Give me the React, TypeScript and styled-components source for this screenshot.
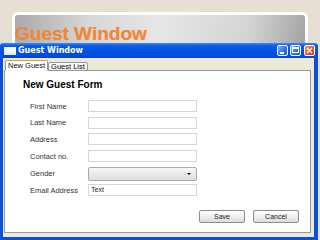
import React from 'react';
import styled, { createGlobalStyle } from 'styled-components';

const GlobalStyle = createGlobalStyle`
  html, body {
    margin: 0;
    padding: 0;
    background: #e5dfd4;
  }
  * {
    box-sizing: border-box;
  }
`;

const fields = [
  { label: 'First Name', h: 16 },
  { label: 'Last Name', h: 17 },
  { label: 'Address', h: 16 },
  { label: 'Contact no.', h: 18 },
  { label: 'Gender', h: 17, combo: true },
  { label: 'Email Address', h: 16, value: 'Text' },
];

const App: React.FC = () => {
  return (
    <Page>
      <GlobalStyle />
      <Slide>
        <SlideTitle>Guest Window</SlideTitle>
      </Slide>
      <Window>
        <TitleBar>
          <AppIcon />
          <TitleText>Guest Window</TitleText>
          <Controls>
            <CtrlButton>
              <svg width="11" height="11" viewBox="0 0 11 11">
                <rect x="3" y="7" width="4" height="2" fill="#fff" />
              </svg>
            </CtrlButton>
            <CtrlButton>
              <svg width="11" height="11" viewBox="0 0 11 11">
                <rect x="2.5" y="2.5" width="6" height="5" fill="none" stroke="#fff" strokeWidth="1" />
                <rect x="2.5" y="2.5" width="6" height="1.5" fill="#fff" />
              </svg>
            </CtrlButton>
            <CtrlButton close>
              <svg width="11" height="11" viewBox="0 0 11 11">
                <path d="M3 3 L8 8 M8 3 L3 8" stroke="#fff" strokeWidth="1.4" />
              </svg>
            </CtrlButton>
          </Controls>
        </TitleBar>
        <Body>
          <Tabs>
            <Tab active>New Guest</Tab>
            <Tab>Guest List</Tab>
          </Tabs>
          <Panel>
            <FormTitle>New Guest Form</FormTitle>
            {fields.map((f) => (
              <Row key={f.label} h={f.h}>
                <Label>{f.label}</Label>
                {f.combo ? (
                  <Combo>
                    <Caret />
                  </Combo>
                ) : (
                  <Input>{f.value}</Input>
                )}
              </Row>
            ))}
            <Actions>
              <Button>Save</Button>
              <Button>Cancel</Button>
            </Actions>
          </Panel>
        </Body>
      </Window>
    </Page>
  );
};

const Page = styled.div`
  width: 320px;
  height: 240px;
  overflow: hidden;
  display: flex;
  flex-direction: column;
  padding-top: 12px;
`;

const Slide = styled.div`
  margin: 0 12px 0 12px;
  height: 31px;
  border: 3px solid #fff;
  border-bottom: none;
  border-radius: 6px 6px 0 0;
  background: linear-gradient(100deg, #a9a9a9 0%, #d6d6d6 25%, #e6e6e6 50%, #d4d4d4 80%, #a4a4a4 100%);
  padding: 10px 0 0 0;
`;

const SlideTitle = styled.div`
  font-family: 'Liberation Sans', Arial, sans-serif;
  font-weight: bold;
  font-size: 19px;
  line-height: 18px;
  color: #ef8838;
  text-shadow: 0 0 1px rgba(240, 140, 60, 0.6);
`;

const Window = styled.div`
  width: 318px;
  flex: 1;
  display: flex;
  flex-direction: column;
`;

const TitleBar = styled.div`
  height: 15px;
  display: flex;
  align-items: center;
  padding: 0 3px 0 4px;
  background: linear-gradient(#3d8cf6 0%, #0a5be8 18%, #0052e2 60%, #0048d2 100%);
  border-radius: 3px 3px 0 0;
`;

const AppIcon = styled.div`
  width: 12px;
  height: 8px;
  background: linear-gradient(#ffffff, #e4e8f0);
  margin-right: 2px;
`;

const TitleText = styled.span`
  font-family: 'DejaVu Sans', Verdana, sans-serif;
  font-weight: bold;
  font-size: 8px;
  color: #fff;
  flex: 1;
`;

const Controls = styled.div`
  display: flex;
  gap: 2px;
`;

const CtrlButton = styled.div<{ close?: boolean }>`
  width: 11px;
  height: 11px;
  border: 1px solid #fff;
  border-radius: 2px;
  margin-left: ${(p) => (p.close ? '1px' : '0')};
  background: ${(p) =>
    p.close
      ? 'linear-gradient(135deg, #f29a7a 0%, #e2582e 55%, #c8401a 100%)'
      : 'linear-gradient(135deg, #7fb0fb 0%, #2f74ee 55%, #1f5ad8 100%)'};
  display: flex;
  align-items: center;
  justify-content: center;
  svg {
    display: block;
    margin: -1px;
  }
`;

const Body = styled.div`
  flex: 1;
  background: #ece9d8;
  border-left: 3px solid #0a4fd6;
  border-right: 4px solid #0a4fd6;
  border-bottom: 3px solid #0a4fd6;
  padding: 2px 3px 4px 1px;
  display: flex;
  flex-direction: column;
`;

const Tabs = styled.div`
  display: flex;
  align-items: flex-end;
  padding-left: 1px;
  height: 11px;
  position: relative;
  z-index: 1;
  margin-bottom: -1px;
`;

const Tab = styled.div<{ active?: boolean }>`
  font-family: 'Liberation Sans', Arial, sans-serif;
  font-size: 7.5px;
  color: #111;
  height: ${(p) => (p.active ? '11px' : '9px')};
  line-height: ${(p) => (p.active ? '10px' : '8px')};
  padding: 0 2px;
  border: 1px solid #919b9c;
  border-bottom: ${(p) => (p.active ? '1px solid #fff' : '1px solid #919b9c')};
  border-radius: 2px 2px 0 0;
  background: ${(p) => (p.active ? '#fff' : 'linear-gradient(#ffffff, #ecebe5)')};
  border-top-color: ${(p) => (p.active ? '#e69a2c' : '#919b9c')};
`;

const Panel = styled.div`
  flex: 1;
  background: #fff;
  border: 1px solid #919b9c;
  padding: 8px 11px 0 18px;
  display: flex;
  flex-direction: column;
`;

const FormTitle = styled.div`
  font-family: 'Liberation Sans', Arial, sans-serif;
  font-weight: bold;
  font-size: 10px;
  line-height: 12px;
  color: #000;
  margin-bottom: 7px;
`;

const Row = styled.div<{ h: number }>`
  height: ${(p) => p.h}px;
  display: flex;
  align-items: center;
  padding-left: 7px;
`;

const Label = styled.span`
  width: 58px;
  font-family: 'Liberation Sans', Arial, sans-serif;
  font-size: 7.5px;
  color: #333;
`;

const Input = styled.div`
  width: 109px;
  height: 12px;
  border: 1px solid #d6d6d6;
  background: #fff;
  font-family: 'Liberation Sans', Arial, sans-serif;
  font-size: 7px;
  line-height: 10px;
  padding-left: 2px;
  color: #222;
`;

const Combo = styled.div`
  width: 109px;
  height: 14px;
  border: 1px solid #a9a9a9;
  border-radius: 2px;
  background: linear-gradient(#f6f6f6, #dedede);
  display: flex;
  align-items: center;
  justify-content: flex-end;
  padding-right: 5px;
`;

const Caret = styled.div`
  width: 0;
  height: 0;
  border-left: 2px solid transparent;
  border-right: 2px solid transparent;
  border-top: 2px solid #000;
`;

const Actions = styled.div`
  display: flex;
  justify-content: flex-end;
  gap: 8px;
  margin-top: 12px;
`;

const Button = styled.div`
  width: 46px;
  height: 13px;
  border: 1px solid #8c8c8c;
  border-radius: 2px;
  background: linear-gradient(#ffffff, #dcdcdc);
  font-family: 'Liberation Sans', Arial, sans-serif;
  font-size: 7px;
  line-height: 11px;
  text-align: center;
  color: #222;
`;

export default App;
